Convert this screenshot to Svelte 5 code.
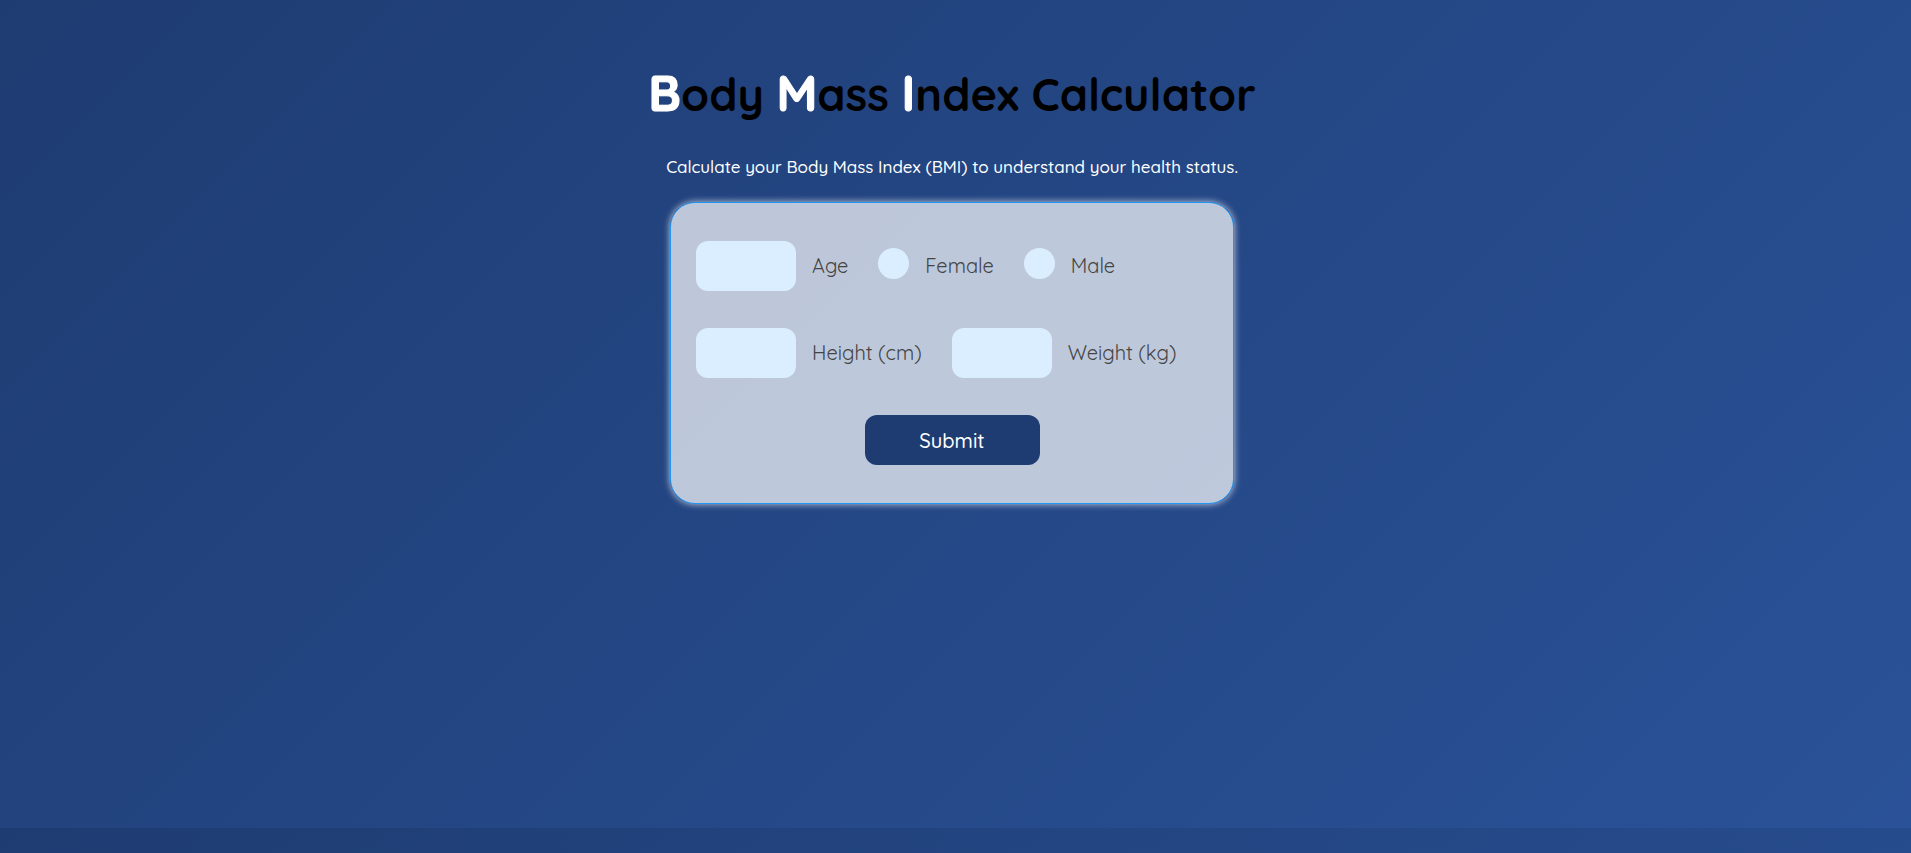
<script>
  let age = $state('');
  let sex = $state('');
  let height = $state('');
  let weight = $state('');

  function submit(event) {
    event.preventDefault();
  }
</script>

<main>
  <h1><span>B</span>ody <span>M</span>ass <span>I</span>ndex Calculator</h1>
  <p>Calculate your Body Mass Index (BMI) to understand your health status.</p>

  <form onsubmit={submit}>
    <div class="row">
      <div class="field">
        <input class="box" id="age" type="text" inputmode="numeric" bind:value={age} />
        <label for="age">Age</label>
      </div>
      <div class="field">
        <input class="dot" id="female" type="radio" name="sex" value="female" bind:group={sex} />
        <label for="female">Female</label>
      </div>
      <div class="field">
        <input class="dot" id="male" type="radio" name="sex" value="male" bind:group={sex} />
        <label for="male">Male</label>
      </div>
    </div>
    <div class="row">
      <div class="field">
        <input class="box" id="height" type="text" inputmode="numeric" bind:value={height} />
        <label for="height">Height (cm)</label>
      </div>
      <div class="field">
        <input class="box" id="weight" type="text" inputmode="numeric" bind:value={weight} />
        <label for="weight">Weight (kg)</label>
      </div>
    </div>
    <button type="submit">Submit</button>
  </form>
</main>

<style>
  :global(body) {
    background: linear-gradient(135deg, #1e3c72, #2a5298);
    font-family: Quicksand, Lato, sans-serif;
  }

  main {
    box-sizing: border-box;
    min-height: calc(100vh - 25px);
    padding: 63px 7px 0 0;
    display: flex;
    flex-direction: column;
    align-items: center;
  }

  h1 {
    margin: 0;
    font-size: 45px;
    line-height: 60px;
    font-weight: 700;
    color: #000;
    text-align: center;
  }

  h1 span {
    font-size: 50px;
    color: #fff;
    -webkit-text-stroke: 1px #fff;
  }

  p {
    margin: 32px 0 24px;
    font-size: 17px;
    line-height: 22px;
    font-weight: 500;
    color: #fff;
    text-align: center;
  }

  form {
    box-sizing: border-box;
    width: 564px;
    max-width: 100%;
    padding: 38px 25px;
    display: flex;
    flex-direction: column;
    gap: 37px;
    border: 1px solid #2196f3;
    border-radius: 25px;
    background: rgba(255, 255, 255, 0.7);
    box-shadow: 0 0 7px rgba(255, 255, 255, 0.75);
  }

  .row {
    display: flex;
    flex-wrap: wrap;
    gap: 30px;
  }

  .field {
    display: flex;
    align-items: center;
    gap: 16px;
  }

  label {
    font-size: 20px;
    line-height: 24px;
    font-weight: 400;
    color: #444;
  }

  input {
    box-sizing: border-box;
    margin: 0;
    border: 0;
    background: #dbeeff;
    font: inherit;
    font-size: 20px;
  }

  .box {
    width: 100px;
    height: 50px;
    padding: 0 12px;
    border-radius: 12px;
  }

  .dot {
    appearance: none;
    width: 31px;
    height: 31px;
    margin-bottom: 6px;
    border-radius: 50%;
  }

  .dot:checked {
    background: #1e3c72;
  }

  button {
    align-self: center;
    width: 175px;
    height: 50px;
    border: 0;
    border-radius: 12px;
    background: #1e3c72;
    color: #fff;
    font: inherit;
    font-size: 20px;
    font-weight: 500;
    cursor: pointer;
  }
</style>
